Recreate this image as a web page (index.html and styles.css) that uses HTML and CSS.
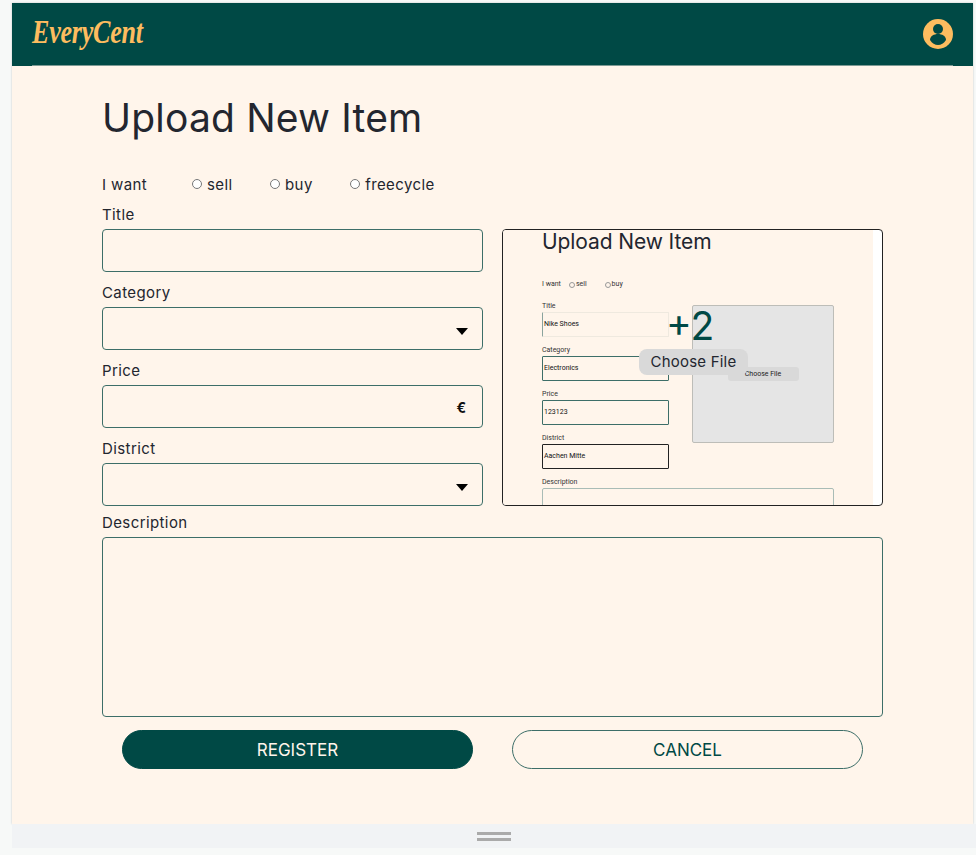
FILE: index.html
```html
<!DOCTYPE html>
<html lang="en">
<head>
  <meta charset="UTF-8" />
  <meta name="viewport" content="width=device-width, initial-scale=1" />
  <title>Upload New Item</title>
  <link rel="stylesheet" href="styles.css">
</head>
<body>

<div class="frame">
  <header class="topbar">
    <span class="logo">EveryCent</span>
    <svg class="user-icon" viewBox="0 0 30 30" aria-label="Account">
      <circle cx="15" cy="15" r="15" fill="#fdbc5f" />
      <circle cx="15" cy="10" r="5" fill="#004945" />
      <path d="M7 21C7 17 11 15 15 15C19 15 23 17 23 21C21 24.5 18 26 15 26C12 26 9 24.5 7 21Z" fill="#004945" />
    </svg>
  </header>
  <div class="topbar-rule"></div>

  <main class="content">
    <h1>Upload New Item</h1>

    <form autocomplete="off">
      <div class="want-row">
        <span class="want-label">I want</span>
        <label class="radio"><input type="radio" name="want" />sell</label>
        <label class="radio"><input type="radio" name="want" />buy</label>
        <label class="radio"><input type="radio" name="want" />freecycle</label>
      </div>

      <div class="columns">
        <div class="fields">
          <label class="field-label" for="title">Title</label>
          <input class="control" type="text" id="title" />

          <label class="field-label" for="category">Category</label>
          <div class="select-wrap">
            <select class="control" id="category"></select>
          </div>

          <label class="field-label" for="price">Price</label>
          <div class="price-wrap">
            <input class="control" type="text" id="price" />
            <span class="euro">€</span>
          </div>

          <label class="field-label" for="district">District</label>
          <div class="select-wrap">
            <select class="control" id="district"></select>
          </div>
        </div>

        <div class="preview">
          <div class="shot">
            <div class="shot-title">Upload New Item</div>
            <div class="shot-want">
              <span>I want</span>
              <span class="shot-radio">sell</span>
              <span class="shot-radio">buy</span>
            </div>
            <div class="shot-columns">
              <div>
                <div class="shot-label">Title</div>
                <div class="shot-input faded">Nike Shoes</div>
                <div class="shot-label">Category</div>
                <div class="shot-input">Electronics</div>
                <div class="shot-label">Price</div>
                <div class="shot-input">123123</div>
                <div class="shot-label">District</div>
                <div class="shot-input dark">Aachen Mitte</div>
              </div>
              <div class="shot-drop">
                <span class="shot-file">Choose File</span>
              </div>
            </div>
            <div class="shot-label">Description</div>
            <div class="shot-area"></div>
          </div>
          <div class="shot-edge"></div>
          <span class="plus-count">+2</span>
          <button type="button" class="file-btn">Choose File</button>
        </div>
      </div>

      <label class="field-label desc-label" for="description">Description</label>
      <textarea class="control desc" id="description"></textarea>

      <div class="actions">
        <button type="button" class="btn primary">REGISTER</button>
        <button type="button" class="btn outline">CANCEL</button>
      </div>
    </form>
  </main>
</div>

<div class="handle-bar">
  <span class="handle"></span>
</div>

</body>
</html>
```

FILE: styles.css
```css
* {
  box-sizing: border-box;
}
body {
  margin: 0;
  padding: 3px 0 7px 12px;
  background: #f7f9f8;
  color: #23262f;
  font-family: Inter, "Noto Sans", sans-serif;
}
.frame {
  width: 961px;
  background: #fff5eb;
  box-shadow: 0 0 2px rgba(0,0,0,0.2);
}

/* Top bar */
.topbar {
  display: flex;
  align-items: center;
  justify-content: space-between;
  height: 62px;
  padding: 0 20px;
  background: #004945;
}
.logo {
  display: inline-block;
  margin-top: -3px;
  font-family: "Liberation Serif", serif;
  font-style: italic;
  font-weight: bold;
  font-size: 33px;
  letter-spacing: -0.3px;
  color: #fdbc5f;
  transform: scaleX(0.79);
  transform-origin: left center;
}
.user-icon {
  width: 30px;
  height: 30px;
}
.topbar-rule {
  height: 1px;
  border: solid #004945;
  border-width: 0 20px;
  background-color: #7d9a94;
  background-clip: padding-box;
}

/* Main form */
.content {
  padding: 29px 90px 55px;
}
h1 {
  margin: 0 0 32px;
  font-size: 39px;
  line-height: 46px;
  font-weight: 400;
  letter-spacing: 0.2px;
}
.want-row {
  display: flex;
  align-items: center;
  gap: 37.5px;
  height: 22px;
  font-size: 15px;
  letter-spacing: 0.4px;
  margin-bottom: 8px;
}
.want-label {
  width: 52.5px;
}
.radio {
  display: flex;
  align-items: center;
  gap: 5px;
}
.radio input {
  width: 10px;
  height: 10px;
  margin: 0;
}
.columns {
  display: grid;
  grid-template-columns: 381px 381px;
  gap: 19px;
}
.field-label {
  display: block;
  font-size: 15px;
  letter-spacing: 0.4px;
  line-height: 24px;
  margin-bottom: 2px;
}
.control {
  display: block;
  width: 100%;
  height: 43px;
  padding: 0 10px;
  background: transparent;
  border: 1px solid #3d6e68;
  border-radius: 4px;
  font: inherit;
  appearance: none;
  margin-bottom: 9px;
}
.select-wrap, .price-wrap {
  position: relative;
}
.select-wrap::after {
  content: "";
  position: absolute;
  right: 15px;
  top: 21px;
  border-left: 6px solid transparent;
  border-right: 6px solid transparent;
  border-top: 7px solid #000;
}
.euro {
  position: absolute;
  right: 17px;
  top: 14px;
  font-size: 14px;
  font-weight: 700;
  line-height: 18px;
  color: #111;
}
.desc-label {
  margin-top: -4px;
}
.desc {
  height: 180px;
  margin-bottom: 13px;
  resize: vertical;
}
.desc::-webkit-resizer {
  background: transparent;
}
.actions {
  display: flex;
  gap: 39px;
  padding: 0 20px;
}
.btn {
  flex: 1;
  height: 39px;
  border-radius: 20px;
  border: 1px solid #004945;
  font-family: inherit;
  font-size: 17px;
  cursor: pointer;
}
.btn.primary {
  background: #004945;
  color: #fff5eb;
}
.btn.outline {
  background: transparent;
  color: #004945;
  border-color: #3d6e68;
}

/* Image preview with page screenshot inside */
.preview {
  position: relative;
  display: flex;
  height: 277px;
  margin-top: 26px;
  border: 1px solid #222;
  border-radius: 4px;
  overflow: hidden;
  background: #fff;
}
.shot {
  flex: 1;
  padding: 1px 0 0 39px;
  background: #fff5eb;
  font-family: Roboto, sans-serif;
  font-size: 7px;
  color: #333;
}
.shot-edge {
  width: 9px;
}
.shot-title {
  font-family: Inter, sans-serif;
  font-size: 21px;
  letter-spacing: -0.1px;
  line-height: 22px;
  color: #23262f;
}
.shot-want {
  display: flex;
  gap: 8px;
  height: 10px;
  line-height: 10px;
  margin-top: 26px;
  margin-bottom: 12px;
}
.shot-radio {
  position: relative;
  padding-left: 7px;
  margin-right: 10px;
}
.shot-radio::before {
  content: "";
  position: absolute;
  left: 0;
  top: 3px;
  width: 4px;
  height: 4px;
  border: 1px solid #999;
  border-radius: 50%;
}
.shot-columns {
  display: grid;
  grid-template-columns: 127px 142px;
  gap: 23px;
}
.shot-label {
  line-height: 11px;
  height: 10px;
  margin-bottom: 1px;
}
.shot-input {
  height: 25px;
  padding-left: 1px;
  margin-bottom: 8px;
  line-height: 23px;
  border: 1px solid #3d6e68;
  border-radius: 1px;
  color: #111;
}
.shot-input.faded {
  border-color: #efe9df;
  border-left-color: #8aa39d;
}
.shot-input.dark {
  border-color: #222;
}
.shot-drop {
  display: flex;
  align-items: center;
  justify-content: center;
  align-self: start;
  height: 138px;
  margin-top: 4px;
  background: #e5e5e5;
  border: 1px solid #bdbdb8;
  border-radius: 2px;
}
.shot-file {
  width: 71px;
  height: 14px;
  line-height: 14px;
  text-align: center;
  background: #d9d9d9;
  border-radius: 3px;
  color: #222;
}
.shot-area {
  width: 292px;
  height: 60px;
  border: 1px solid #a9bcb6;
  border-radius: 2px;
}
.plus-count {
  position: absolute;
  left: 163px;
  top: 73px;
  font-size: 39px;
  line-height: 46px;
  color: #004945;
}
.file-btn {
  position: absolute;
  left: 136px;
  top: 119px;
  width: 109px;
  height: 26px;
  padding: 0 0 2px;
  background: #d9d9d9;
  border: none;
  border-radius: 8px;
  font-family: inherit;
  font-size: 15px;
  letter-spacing: 0.2px;
  color: #23262f;
}

/* Bottom drag handle */
.handle-bar {
  display: flex;
  align-items: center;
  justify-content: center;
  height: 24px;
  background: #f1f3f5;
}
.handle {
  width: 34px;
  height: 9px;
  border-top: 3px solid #aaa;
  border-bottom: 3px solid #aaa;
}
```
